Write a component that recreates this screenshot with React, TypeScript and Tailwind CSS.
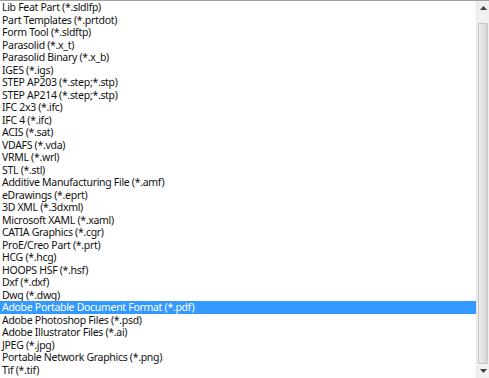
import React from "react";

const items = [
  "Lib Feat Part (*.sldlfp)",
  "Part Templates (*.prtdot)",
  "Form Tool (*.sldftp)",
  "Parasolid (*.x_t)",
  "Parasolid Binary (*.x_b)",
  "IGES (*.igs)",
  "STEP AP203 (*.step;*.stp)",
  "STEP AP214 (*.step;*.stp)",
  "IFC 2x3 (*.ifc)",
  "IFC 4 (*.ifc)",
  "ACIS (*.sat)",
  "VDAFS (*.vda)",
  "VRML (*.wrl)",
  "STL (*.stl)",
  "Additive Manufacturing File (*.amf)",
  "eDrawings (*.eprt)",
  "3D XML (*.3dxml)",
  "Microsoft XAML (*.xaml)",
  "CATIA Graphics (*.cgr)",
  "ProE/Creo Part (*.prt)",
  "HCG (*.hcg)",
  "HOOPS HSF (*.hsf)",
  "Dxf (*.dxf)",
  "Dwg (*.dwg)",
  "Adobe Portable Document Format (*.pdf)",
  "Adobe Photoshop Files (*.psd)",
  "Adobe Illustrator Files (*.ai)",
  "JPEG (*.jpg)",
  "Portable Network Graphics (*.png)",
  "Tif (*.tif)",
];

export default function App() {
  return (
    <div
      className="w-[489px] h-[378px] bg-white flex border-t border-[#a0a0a0] overflow-hidden"
      style={{ fontFamily: '"Noto Sans", "Noto Sans CJK SC", sans-serif' }}
    >
      <div className="flex-1 flex flex-col">
        {items.map((t, i) => (
          <div
            key={i}
            className={
              "h-[12.5px] shrink-0 pl-[2px] text-[10.5px] tracking-[-0.3px] leading-[12.5px] whitespace-nowrap " +
              (i === 24 ? "bg-[#3399ff] text-white" : "text-[#111]")
            }
          >
            {t}
          </div>
        ))}
      </div>
      <div className="w-[13px] flex flex-col bg-[#f0f0f0] border-l border-[#e6e6e6]">
        <div className="h-[22px] flex justify-center items-start pt-[5px]">
          <svg width="7" height="4" viewBox="0 0 7 4">
            <polygon points="3.5,0 7,4 0,4" fill="#404040" />
          </svg>
        </div>
        <div className="flex-1 mx-[1px] border border-[#c4c4c4] bg-gradient-to-r from-[#ececec] via-[#e2e2e2] to-[#d6d6d6] rounded-[1px]" />
        <div className="h-[14px] flex justify-center items-center">
          <svg width="7" height="4" viewBox="0 0 7 4">
            <polygon points="0,0 7,0 3.5,4" fill="#404040" />
          </svg>
        </div>
      </div>
    </div>
  );
}
